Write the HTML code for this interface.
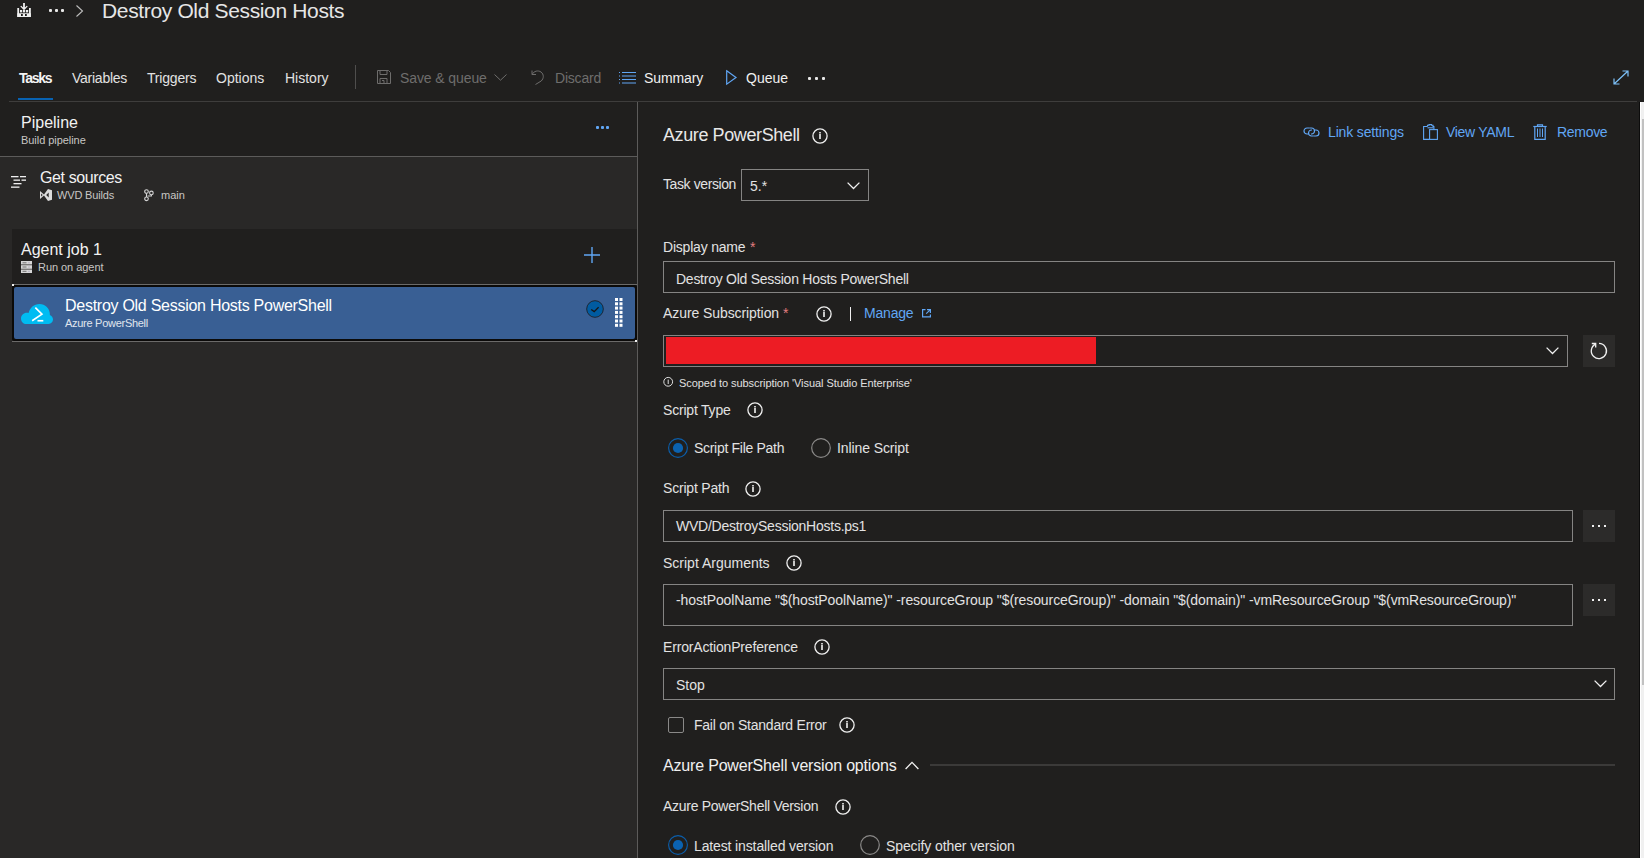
<!DOCTYPE html>
<html><head><meta charset="utf-8">
<style>
*{margin:0;padding:0;box-sizing:border-box}
html,body{width:1644px;height:858px;overflow:hidden;background:#201f1e;font-family:"Liberation Sans",sans-serif;color:#e2e2e2}
.a{position:absolute}
.t{position:absolute;white-space:pre;line-height:1}
.s14{font-size:14px}
.s11{font-size:11px}
.s16{font-size:16px}
.blue{color:#60a6f4}
.dis{color:#6e6d6c}
.sec{color:#c8c6c4}
.box{position:absolute;border:1px solid #858483}
svg{position:absolute;overflow:visible}
</style></head><body>
<!-- ===== HEADER ===== -->
<div id="header">
<!-- build icon -->
<svg style="left:17px;top:3px" width="14" height="14" viewBox="0 0 14 14">
 <path d="M6.1 0h1.8v4.6l1.9-1.9 0.9 0.9L7 7.2 3.3 3.6l0.9-0.9 1.9 1.9z" fill="#f0f0f0"/>
 <rect x="0.3" y="5" width="1.8" height="9" fill="#f0f0f0"/><rect x="12" y="5" width="1.8" height="9" fill="#f0f0f0"/>
 <rect x="3" y="7" width="2.2" height="2.4" fill="#f0f0f0"/><rect x="6" y="7" width="2.2" height="2.4" fill="#f0f0f0"/><rect x="9" y="7" width="2.2" height="2.4" fill="#f0f0f0"/>
 <path d="M0.3 10.2h13.5V14H0.3z M4 11v2h1.8v-2z M8 11v2h1.8v-2z" fill="#f0f0f0" fill-rule="evenodd"/>
</svg>
<div class="a" style="left:49px;top:9px;width:3px;height:3px;background:#e8e8e8;border-radius:1px"></div>
<div class="a" style="left:55px;top:9px;width:3px;height:3px;background:#e8e8e8;border-radius:1px"></div>
<div class="a" style="left:61px;top:9px;width:3px;height:3px;background:#e8e8e8;border-radius:1px"></div>
<svg style="left:76px;top:5px" width="8" height="13" viewBox="0 0 8 13"><path d="M0.5 0.5L6.5 6L0.5 11.5" stroke="#bdbdbd" stroke-width="1.1" fill="none"/></svg>
<div class="t" style="left:102px;top:0px;font-size:21px;letter-spacing:-0.35px;color:#e6e6e6">Destroy Old Session Hosts</div>

<!-- tabs -->
<div class="t s14" style="left:19px;top:71px;font-weight:bold;letter-spacing:-1.3px;color:#f4f4f4">Tasks</div>
<div class="t s14" style="left:72px;top:71px;letter-spacing:-0.25px">Variables</div>
<div class="t s14" style="left:147px;top:71px;letter-spacing:-0.2px">Triggers</div>
<div class="t s14" style="left:216px;top:71px">Options</div>
<div class="t s14" style="left:285px;top:71px">History</div>
<div class="a" style="left:18px;top:98px;width:35px;height:2px;background:#0862b2"></div>
<div class="a" style="left:355px;top:65px;width:1px;height:24px;background:#4f4e4d"></div>
<!-- save icon -->
<svg style="left:377px;top:70px" width="14" height="14" viewBox="0 0 14 14"><path d="M0.5 0.5h11l2 2v11h-13z M3 0.5v4h7v-4 M3 13.5v-5h7v5 M5 10.5h2v3" stroke="#6e6d6c" stroke-width="1" fill="none"/></svg>
<div class="t s14 dis" style="left:400px;top:71px;letter-spacing:-0.1px">Save &amp; queue</div>
<svg style="left:494px;top:74px" width="13" height="7" viewBox="0 0 13 7"><path d="M0.5 0.5L6.5 6.2L12.5 0.5" stroke="#6e6d6c" stroke-width="1" fill="none"/></svg>
<svg style="left:531px;top:69px" width="14" height="16" viewBox="0 0 14 16"><path d="M1 1.5v4h4 M1.2 5.3C3 2 7 1 10 3c3 2.2 3 6.5 0.2 9L4.5 15.5" stroke="#6e6d6c" stroke-width="1" fill="none"/></svg>
<div class="t s14 dis" style="left:555px;top:71px;letter-spacing:-0.2px">Discard</div>
<!-- summary icon -->
<svg style="left:619px;top:72px" width="18" height="12" viewBox="0 0 18 12">
 <g fill="#60a6f4"><rect x="0" y="0" width="1" height="1"/><rect x="0" y="3.5" width="1" height="1"/><rect x="0" y="7" width="1" height="1"/><rect x="0" y="10.5" width="1" height="1"/>
 <rect x="3" y="0" width="14" height="1"/><rect x="3" y="3.5" width="14" height="1"/><rect x="3" y="7" width="14" height="1"/><rect x="3" y="10.5" width="14" height="1"/></g>
</svg>
<div class="t s14" style="left:644px;top:71px;letter-spacing:-0.1px;color:#f0f0f0">Summary</div>
<svg style="left:726px;top:70px" width="11" height="15" viewBox="0 0 11 15"><path d="M0.7 0.8L10 7.5L0.7 14.2z" stroke="#60a6f4" stroke-width="1.2" fill="none" stroke-linejoin="miter"/></svg>
<div class="t s14" style="left:746px;top:71px;color:#f0f0f0">Queue</div>
<div class="a" style="left:808px;top:77px;width:3px;height:3px;background:#e8e8e8;border-radius:1px"></div>
<div class="a" style="left:815px;top:77px;width:3px;height:3px;background:#e8e8e8;border-radius:1px"></div>
<div class="a" style="left:822px;top:77px;width:3px;height:3px;background:#e8e8e8;border-radius:1px"></div>
<!-- expand icon -->
<svg style="left:1613px;top:70px" width="16" height="15" viewBox="0 0 16 15"><path d="M1 14L15 1 M9.5 1H15V6.5 M1 8.5V14H6.5" stroke="#7cc0f8" stroke-width="1.2" fill="none"/></svg>
<!-- header line -->
<div class="a" style="left:9px;top:101px;width:1628px;height:1px;background:#3e3d3c"></div>
</div>
<!-- ===== LEFT PANEL ===== -->
<div id="left">
<div class="a" style="left:0;top:157px;width:637px;height:701px;background:#292827"></div>
<div class="a" style="left:0;top:156px;width:637px;height:1px;background:#5c5b5a"></div>
<div class="a" style="left:637px;top:102px;width:1px;height:756px;background:#5c5b5a"></div>
<div class="t s16" style="left:21px;top:115px;color:#f2f2f2">Pipeline</div>
<div class="t s11 sec" style="left:21px;top:135px;letter-spacing:-0.05px">Build pipeline</div>
<div class="a" style="left:596px;top:126px;width:3px;height:3px;background:#60a6f4;border-radius:1px"></div>
<div class="a" style="left:601px;top:126px;width:3px;height:3px;background:#60a6f4;border-radius:1px"></div>
<div class="a" style="left:606px;top:126px;width:3px;height:3px;background:#60a6f4;border-radius:1px"></div>
<!-- get sources -->
<svg style="left:11px;top:176px" width="15" height="12" viewBox="0 0 15 12"><g fill="#f0f0f0">
<rect x="0" y="0" width="7.5" height="1.3"/><rect x="9" y="0" width="6" height="1.3"/>
<rect x="2.5" y="3.5" width="6.5" height="1.3"/><rect x="10.5" y="3.5" width="4.5" height="1.3"/>
<rect x="2.5" y="7" width="8" height="1.3"/>
<rect x="0" y="10.5" width="8.5" height="1.3"/></g></svg>
<div class="t s16" style="left:40px;top:170px;letter-spacing:-0.4px;color:#f2f2f2">Get sources</div>
<svg style="left:40px;top:189px" width="12" height="12" viewBox="0 0 12 12"><path d="M0 2L4 5.6L8 0L12 1.2V10.8L8 12L4 6.4L0 10Z M1.1 4.4V7.6L2.7 6Z M8.7 3.6L6.2 6L8.7 8.4Z" fill="#dcdcdc" fill-rule="evenodd"/></svg>
<div class="t s11 sec" style="left:57px;top:190px;letter-spacing:-0.15px">WVD Builds</div>
<svg style="left:144px;top:189px" width="10" height="12" viewBox="0 0 10 12"><g stroke="#d6d6d6" stroke-width="1.1" fill="none"><circle cx="2.5" cy="2.5" r="1.8"/><circle cx="2.5" cy="9.8" r="1.8"/><circle cx="7.4" cy="3.9" r="1.8"/><path d="M2.5 4.3v3.7 M7.4 5.7V7H3.6"/></g></svg>
<div class="t s11 sec" style="left:161px;top:190px">main</div>
<!-- agent job -->
<div class="a" style="left:12px;top:229px;width:625px;height:55px;background:#201f1e"></div>
<div class="t s16" style="left:21px;top:242px;color:#f2f2f2">Agent job 1</div>
<svg style="left:21px;top:261px" width="11" height="12" viewBox="0 0 11 12"><g fill="#d6d6d6"><rect x="0" y="0" width="11" height="3.5"/><rect x="0" y="4.2" width="11" height="3.6"/><rect x="0" y="8.5" width="11" height="3.5"/></g>
<g fill="#707070"><rect x="1.5" y="1.3" width="4" height="1"/><rect x="1.5" y="5.5" width="4" height="1"/><rect x="1.5" y="9.8" width="4" height="1"/></g><g fill="#9a8fb0"><rect x="7.5" y="1.3" width="1" height="1"/><rect x="7.5" y="5.5" width="1" height="1"/><rect x="7.5" y="9.8" width="1" height="1"/></g></svg>
<div class="t s11 sec" style="left:38px;top:262px;letter-spacing:-0.05px">Run on agent</div>
<svg style="left:584px;top:247px" width="16" height="16" viewBox="0 0 16 16"><path d="M8 0v16 M0 8h16" stroke="#60a6f4" stroke-width="1.4"/></svg>
<!-- selected task -->
<div class="a" style="left:12px;top:284px;width:625px;height:1px;background:#6b6a69"></div>
<div class="a" style="left:12px;top:341px;width:625px;height:1px;background:#6b6a69"></div>
<div class="a" style="left:12px;top:285px;width:625px;height:56px;background:#0b0a09;border-radius:2px"></div>
<div class="a" style="left:14px;top:287px;width:621px;height:52px;background:#395f94;border-radius:2px"></div>
<div class="a" style="left:12px;top:284px;width:2px;height:2px;background:#f0f0f0"></div>
<div class="a" style="left:635px;top:340px;width:2px;height:2px;background:#f0f0f0"></div>
<svg style="left:21px;top:303px" width="32" height="21.5" viewBox="0 0 33 22" preserveAspectRatio="none">
 <path d="M5.5 21.5C2.5 21.5 0 19 0 15.8 0 12.5 2.7 10 6 10c0.7 0 1.3 0.1 1.8 0.3C9 5 13.5 1 19 1c6 0 10.8 4.8 10.8 10.5 0 0.3 0 0.6-0.1 0.9C31.6 13 33 14.8 33 17c0 2.5-2 4.5-4.5 4.5z" fill="#00bcf2"/>
 <path d="M14.8 4.8L21.6 11.5L11.5 18.2" stroke="#fff" stroke-width="1.7" fill="none"/>
 <rect x="17" y="17.3" width="6" height="1.7" fill="#fff"/>
</svg>
<div class="t s16" style="left:65px;top:298px;letter-spacing:-0.27px;color:#ffffff">Destroy Old Session Hosts PowerShell</div>
<div class="t s11" style="left:65px;top:318px;letter-spacing:-0.28px;color:#e0e6ee">Azure PowerShell</div>
<svg style="left:586px;top:300px" width="18" height="18" viewBox="0 0 18 18"><circle cx="9" cy="9" r="8.3" fill="#005ba1" stroke="#1c2633" stroke-width="1"/><path d="M5.2 9.4L8.2 11.6L12.6 7.3" stroke="#161616" stroke-width="1.3" fill="none"/></svg>
<svg style="left:615px;top:298px" width="8" height="30" viewBox="0 0 8 30"><g fill="#ffffff">
<rect x="0" y="0" width="3" height="3"/><rect x="4.5" y="0" width="3" height="3"/>
<rect x="0" y="4.3" width="3" height="3"/><rect x="4.5" y="4.3" width="3" height="3"/>
<rect x="0" y="8.6" width="3" height="3"/><rect x="4.5" y="8.6" width="3" height="3"/>
<rect x="0" y="12.9" width="3" height="3"/><rect x="4.5" y="12.9" width="3" height="3"/>
<rect x="0" y="17.2" width="3" height="3"/><rect x="4.5" y="17.2" width="3" height="3"/>
<rect x="0" y="21.5" width="3" height="3"/><rect x="4.5" y="21.5" width="3" height="3"/>
<rect x="0" y="25.8" width="3" height="3"/><rect x="4.5" y="25.8" width="3" height="3"/></g></svg>
</div>
<!-- ===== RIGHT PANEL ===== -->
<div id="right">
<svg width="0" height="0" style="position:absolute"><defs>
<g id="info"><circle cx="8" cy="8" r="7.1" stroke="#f0f0f0" stroke-width="1.3" fill="none"/><rect x="7.2" y="4" width="1.6" height="1.5" fill="#f0f0f0"/><rect x="7.2" y="6" width="1.6" height="5" fill="#f0f0f0"/></g>
<g id="chev"><path d="M0.6 0.6L6.5 6.5L12.4 0.6" stroke="#f0f0f0" stroke-width="1.3" fill="none"/></g>
</defs></svg>
<div class="t" style="left:663px;top:126px;font-size:18px;letter-spacing:-0.4px;color:#e8e8e8">Azure PowerShell</div>
<svg style="left:812px;top:128px" width="16" height="16"><use href="#info"/></svg>
<!-- link settings -->
<svg style="left:1303px;top:127px" width="17" height="10" viewBox="0 0 17 10"><g stroke="#60a6f4" stroke-width="1.2" fill="none"><path d="M6.5 1H4a3 3 0 0 0 0 6h1.5"/><path d="M10.5 9H13a3 3 0 0 0 0-6h-1.5"/><path d="M6.5 1h2a3 3 0 0 1 0 6H8"/><path d="M10.5 9h-2a3 3 0 0 1 0-6H9"/></g></svg>
<div class="t s14 blue" style="left:1328px;top:125px;letter-spacing:-0.15px">Link settings</div>
<svg style="left:1423px;top:124px" width="15" height="16" viewBox="0 0 15 16"><g stroke="#60a6f4" stroke-width="1.1" fill="none"><path d="M4.5 2.5H0.6v12.9h6"/><path d="M4.5 2.5V1.2h1.5V0.6h2.5v0.6h1.5v1.3h0.9v3"/><path d="M4.5 3.8h6"/><rect x="6.6" y="5.6" width="7.8" height="9.8"/></g></svg>
<div class="t s14 blue" style="left:1446px;top:125px;letter-spacing:-0.3px">View YAML</div>
<svg style="left:1533px;top:124px" width="14" height="16" viewBox="0 0 14 16"><g stroke="#60a6f4" stroke-width="1.2" fill="none"><path d="M0.3 2.5h13.4"/><path d="M4.5 2.5V0.8h5v1.7"/><path d="M1.8 2.5v12.9h10.4V2.5"/></g><g fill="#60a6f4"><rect x="4" y="4.5" width="1" height="8.5"/><rect x="6.5" y="4.5" width="1" height="8.5"/><rect x="9" y="4.5" width="1" height="8.5"/></g></svg>
<div class="t s14 blue" style="left:1557px;top:125px;letter-spacing:-0.3px">Remove</div>

<!-- task version -->
<div class="t s14" style="left:663px;top:177px;letter-spacing:-0.4px">Task version</div>
<div class="box" style="left:741px;top:169px;width:128px;height:32px"></div>
<div class="t s14" style="left:750px;top:179px">5.*</div>
<svg style="left:847px;top:182px" width="13" height="8"><use href="#chev"/></svg>

<!-- display name -->
<div class="t s14" style="left:663px;top:240px;letter-spacing:-0.2px">Display name</div>
<div class="t" style="left:750px;top:240px;font-size:14px;color:#e37d80">*</div>
<div class="box" style="left:663px;top:261px;width:952px;height:32px"></div>
<div class="t s14" style="left:676px;top:272px;letter-spacing:-0.26px">Destroy Old Session Hosts PowerShell</div>

<!-- subscription -->
<div class="t s14" style="left:663px;top:306px;letter-spacing:-0.08px">Azure Subscription</div>
<div class="t" style="left:783px;top:306px;font-size:14px;color:#e37d80">*</div>
<svg style="left:816px;top:306px" width="16" height="16"><use href="#info"/></svg>
<div class="a" style="left:850px;top:307px;width:1.3px;height:14px;background:#f0f0f0"></div>
<div class="t s14 blue" style="left:864px;top:306px;letter-spacing:-0.2px">Manage</div>
<svg style="left:922px;top:309px" width="9" height="8.5" viewBox="0 0 9 8.5"><g stroke="#60a6f4" stroke-width="1.2" fill="none"><path d="M3.5 0.6H0.6v7.3h7.8V5.5"/><path d="M5 0.6h3.4V4 M8.4 0.6L4.2 4.6"/></g></svg>
<div class="box" style="left:663px;top:335px;width:905px;height:32px"></div>
<div class="a" style="left:666px;top:337px;width:430px;height:27px;background:#ed1c24"></div>
<svg style="left:1546px;top:347px" width="13" height="8"><use href="#chev"/></svg>
<div class="a" style="left:1583px;top:335px;width:32px;height:32px;background:#2c2b2a"></div>
<svg style="left:1590px;top:342px" width="18" height="18" viewBox="0 0 18 18"><g stroke="#f0f0f0" stroke-width="1.3" fill="none"><path d="M5.5 2.2A7.6 7.6 0 1 0 9 1.4"/><path d="M1.8 1.5H5.7V5.4"/></g></svg>
<svg style="left:663px;top:377px" width="11" height="10" viewBox="0 0 11 10"><circle cx="5.2" cy="4.8" r="4.4" stroke="#e0e0e0" stroke-width="1" fill="none"/><rect x="4.7" y="2.6" width="1" height="4.4" fill="#e0e0e0"/></svg>
<div class="t s11" style="left:679px;top:378px;letter-spacing:-0.06px;color:#e0e0e0">Scoped to subscription 'Visual Studio Enterprise'</div>

<!-- script type -->
<div class="t s14" style="left:663px;top:403px;letter-spacing:-0.2px">Script Type</div>
<svg style="left:747px;top:402px" width="16" height="16"><use href="#info"/></svg>
<svg style="left:668px;top:438px" width="20" height="20" viewBox="0 0 20 20"><circle cx="10" cy="10" r="9.4" stroke="#0b5eab" stroke-width="1.15" fill="none"/><circle cx="10" cy="10" r="5.1" fill="#0b62b0"/></svg>
<div class="t s14" style="left:694px;top:441px;letter-spacing:-0.3px">Script File Path</div>
<svg style="left:811px;top:438px" width="20" height="20" viewBox="0 0 20 20"><circle cx="10" cy="10" r="9.3" stroke="#8a8988" stroke-width="1.2" fill="none"/></svg>
<div class="t s14" style="left:837px;top:441px;letter-spacing:-0.1px">Inline Script</div>

<!-- script path -->
<div class="t s14" style="left:663px;top:481px;letter-spacing:-0.2px">Script Path</div>
<svg style="left:745px;top:481px" width="16" height="16"><use href="#info"/></svg>
<div class="box" style="left:663px;top:510px;width:910px;height:32px"></div>
<div class="t s14" style="left:676px;top:519px;letter-spacing:-0.25px">WVD/DestroySessionHosts.ps1</div>
<div class="a" style="left:1583px;top:510px;width:32px;height:32px;background:#2c2b2a"></div>
<div class="a" style="left:1592px;top:525px;width:2px;height:2px;background:#f0f0f0"></div>
<div class="a" style="left:1598px;top:525px;width:2px;height:2px;background:#f0f0f0"></div>
<div class="a" style="left:1604px;top:525px;width:2px;height:2px;background:#f0f0f0"></div>

<!-- script args -->
<div class="t s14" style="left:663px;top:556px">Script Arguments</div>
<svg style="left:786px;top:555px" width="16" height="16"><use href="#info"/></svg>
<div class="box" style="left:663px;top:584px;width:910px;height:42px"></div>
<div class="t s14" style="left:676px;top:593px;letter-spacing:-0.09px">-hostPoolName "$(hostPoolName)" -resourceGroup "$(resourceGroup)" -domain "$(domain)" -vmResourceGroup "$(vmResourceGroup)"</div>
<div class="a" style="left:1583px;top:584px;width:32px;height:32px;background:#2c2b2a"></div>
<div class="a" style="left:1592px;top:599px;width:2px;height:2px;background:#f0f0f0"></div>
<div class="a" style="left:1598px;top:599px;width:2px;height:2px;background:#f0f0f0"></div>
<div class="a" style="left:1604px;top:599px;width:2px;height:2px;background:#f0f0f0"></div>

<!-- error action -->
<div class="t s14" style="left:663px;top:640px;letter-spacing:-0.17px">ErrorActionPreference</div>
<svg style="left:814px;top:639px" width="16" height="16"><use href="#info"/></svg>
<div class="box" style="left:663px;top:668px;width:952px;height:32px"></div>
<div class="t s14" style="left:676px;top:678px">Stop</div>
<svg style="left:1594px;top:680px" width="13" height="8"><use href="#chev"/></svg>

<!-- checkbox -->
<div class="a" style="left:668px;top:717px;width:16px;height:16px;border:1px solid #8a8988;border-radius:2px"></div>
<div class="t s14" style="left:694px;top:718px;letter-spacing:-0.24px">Fail on Standard Error</div>
<svg style="left:839px;top:717px" width="16" height="16"><use href="#info"/></svg>

<!-- version options -->
<div class="t s16" style="left:663px;top:758px;letter-spacing:-0.18px;color:#f0f0f0">Azure PowerShell version options</div>
<svg style="left:905px;top:761px" width="14" height="9" viewBox="0 0 14 9"><path d="M0.6 8L7 1.4L13.4 8" stroke="#f0f0f0" stroke-width="1.3" fill="none"/></svg>
<div class="a" style="left:930px;top:764px;width:685px;height:2px;background:#3b3a39"></div>
<div class="t s14" style="left:663px;top:799px;letter-spacing:-0.28px">Azure PowerShell Version</div>
<svg style="left:835px;top:799px" width="16" height="16"><use href="#info"/></svg>
<svg style="left:668px;top:835px" width="20" height="20" viewBox="0 0 20 20"><circle cx="10" cy="10" r="9.4" stroke="#0b5eab" stroke-width="1.15" fill="none"/><circle cx="10" cy="10" r="5.1" fill="#0b62b0"/></svg>
<div class="t s14" style="left:694px;top:839px;letter-spacing:-0.13px">Latest installed version</div>
<svg style="left:860px;top:835px" width="20" height="20" viewBox="0 0 20 20"><circle cx="10" cy="10" r="9.3" stroke="#8a8988" stroke-width="1.2" fill="none"/></svg>
<div class="t s14" style="left:886px;top:839px;letter-spacing:-0.1px">Specify other version</div>
</div>
<!-- scrollbar -->
<div class="a" style="left:1639px;top:102px;width:1px;height:756px;background:#0c0c0c"></div>
<div class="a" style="left:1640px;top:102px;width:1px;height:756px;background:#ffffff"></div>
<div class="a" style="left:1641px;top:102px;width:3px;height:756px;background:#f0f0f0"></div>
<div class="a" style="left:1642px;top:119px;width:2px;height:566px;background:#c1c1c1"></div>
</body></html>
